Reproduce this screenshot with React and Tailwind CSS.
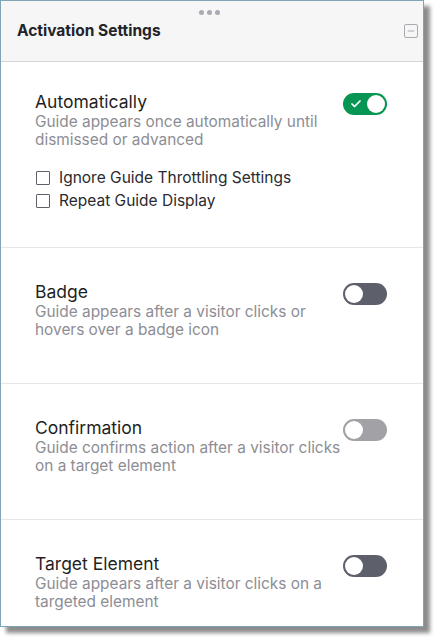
import { Check, Minus } from "lucide-react";

function Toggle({ on, disabled }) {
  const track = on
    ? "bg-[#079553] justify-between"
    : disabled
    ? "bg-[#a1a1a6]"
    : "bg-[#5d606b]";
  return (
    <div
      className={`w-[44px] h-[22px] rounded-full flex items-center px-[2px] shrink-0 ${track}`}
    >
      {on ? (
        <>
          <Check className="w-[12px] h-[12px] text-white ml-[5px]" strokeWidth={3.5} />
          <div className="w-[18px] h-[18px] rounded-full bg-white" />
        </>
      ) : (
        <div className="w-[18px] h-[18px] rounded-full bg-white" />
      )}
    </div>
  );
}

function Section({ title, desc, on, disabled, children, first, last }) {
  const pad = first
    ? "pt-[29px] pb-[35px] border-b border-[#e6e6e6]"
    : last
    ? "pt-[33px] pb-[14px]"
    : "pt-[33px] pb-[44px] border-b border-[#e6e6e6]";
  return (
    <div className={`pl-[34px] pr-[35px] ${pad}`}>
      <div className="flex items-start">
        <div className="flex flex-col whitespace-nowrap flex-1 min-w-0">
          <div className="text-[17.5px] leading-[22px] text-[#1f1f24]">{title}</div>
          <div className="text-[15.4px] leading-[18px] text-[#8d8d94]">{desc}</div>
        </div>
        <div className="pt-[2px] mr-[1px] shrink-0">
          <Toggle on={on} disabled={disabled} />
        </div>
      </div>
      {children}
    </div>
  );
}

function Checkbox({ label }) {
  return (
    <label className="flex items-center gap-[9px] h-[23px]">
      <span className="w-[14px] h-[14px] border border-[#5f6069] rounded-[1px] bg-white ml-[1px]" />
      <span className="text-[15.5px] text-[#2a2a30]">{label}</span>
    </label>
  );
}

export default function App() {
  return (
    <div
      className="w-[435px] h-[637px] bg-white"
      style={{ fontFamily: "Inter, 'Noto Sans', sans-serif" }}
    >
      <div className="w-[424px] h-[627px] border border-[#7ea5b6] bg-white shadow-[6px_6px_4px_rgba(0,0,0,0.45)] flex flex-col overflow-hidden">
        <div className="h-[61px] bg-[#f6f6f6] border-b border-[#d5d5d9] relative flex items-center justify-between pl-[16px] pr-[5px] shrink-0">
          <div className="absolute top-[9px] left-1/2 -translate-x-[13px] flex gap-[3px]">
            <span className="w-[5px] h-[5px] rounded-full bg-[#a9aab2]" />
            <span className="w-[5px] h-[5px] rounded-full bg-[#a9aab2]" />
            <span className="w-[5px] h-[5px] rounded-full bg-[#a9aab2]" />
          </div>
          <div className="text-[15.5px] font-bold text-[#23232a]">
            Activation Settings
          </div>
          <div className="w-[14px] h-[14px] border border-[#a9a9b0] rounded-[2px] flex items-center justify-center">
            <Minus className="w-[10px] h-[10px] text-[#9a9aa2]" strokeWidth={2} />
          </div>
        </div>
        <Section
          first
          title="Automatically"
          desc={
            <>
              Guide appears once automatically until
              <br />
              dismissed or advanced
            </>
          }
          on
        >
          <div className="mt-[17px] flex flex-col">
            <Checkbox label="Ignore Guide Throttling Settings" />
            <Checkbox label="Repeat Guide Display" />
          </div>
        </Section>
        <Section
          title="Badge"
          desc={
            <>
              Guide appears after a visitor clicks or
              <br />
              hovers over a badge icon
            </>
          }
        />
        <Section
          title="Confirmation"
          desc={
            <>
              Guide confirms action after a visitor clicks
              <br />
              on a target element
            </>
          }
          disabled
        />
        <Section
          title="Target Element"
          desc={
            <>
              Guide appears after a visitor clicks on a
              <br />
              targeted element
            </>
          }
          last
        />
      </div>
    </div>
  );
}
